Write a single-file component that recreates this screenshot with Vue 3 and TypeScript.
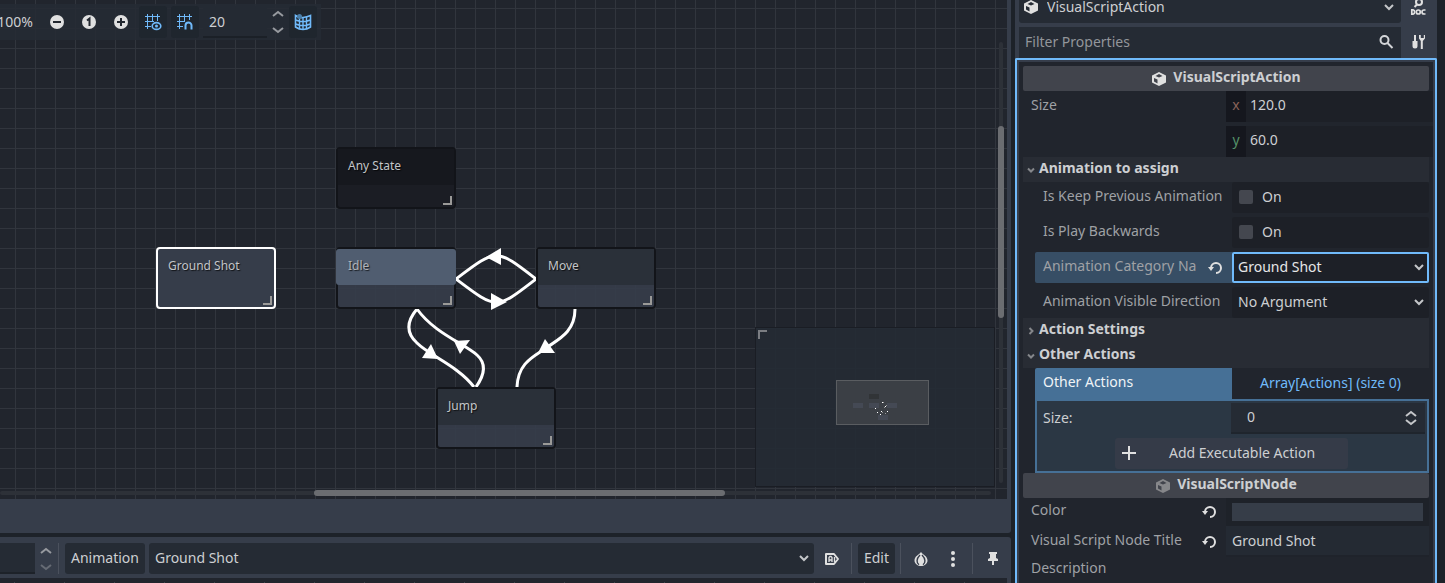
<script setup lang="ts">
import { ref } from 'vue'

interface GraphNode {
  id: string
  title: string
  x: number
  y: number
  kind: string
}

const nodes: GraphNode[] = [
  { id: 'any', title: 'Any State', x: 336, y: 147, kind: 'any' },
  { id: 'shot', title: 'Ground Shot', x: 156, y: 247, kind: 'selected' },
  { id: 'idle', title: 'Idle', x: 336, y: 247, kind: 'idle' },
  { id: 'move', title: 'Move', x: 536, y: 247, kind: 'plain' },
  { id: 'jump', title: 'Jump', x: 436, y: 387, kind: 'plain' },
]

const links: string[] = [
  'M456 279C497 248 496 248 536 279',
  'M456 279C497 310 496 310 536 279',
  'M417 309C406 322 406 333 417 343C430 356 458 366 474 387',
  'M476 387C486 373 486 363 477 355C465 344 434 333 417 309',
  'M575 309C575 333 557 340 546 348S518 362 517 387',
]

const arrows: string[] = [
  '501,248 501,265 486,257',
  '491,293 491,310 507,302',
  '431,344 422,358 438,359',
  '454,341 470,340 460,354',
  '545,339 555,353 538,353',
]

const gridStep = ref('20')
const frame = ref('')
const width = ref('120.0')
const height = ref('60.0')
const keepPrevious = ref(false)
const playBackwards = ref(false)
const arraySize = ref('0')
const nodeTitle = ref('Ground Shot')
</script>

<template>
  <div class="editor">
    <main class="left">
      <section class="canvas" aria-label="State graph">
        <svg class="links" aria-hidden="true">
          <path v-for="d in links" :key="d" :d="d" />
          <polygon v-for="p in arrows" :key="p" :points="p" />
        </svg>
        <article v-for="n in nodes" :key="n.id" class="node" :class="n.kind" :style="{ left: n.x + 'px', top: n.y + 'px' }">
          <header>{{ n.title }}</header>
          <i class="grip"></i>
        </article>

        <div class="toolbar">
          <span class="zoom">100%</span>
          <button class="tool" aria-label="Zoom out">
            <svg width="16" height="16" viewBox="0 0 16 16"><circle cx="8" cy="8" r="7" fill="#e0e0e0" /><path d="M4 8h8" stroke="#22272f" stroke-width="2" /></svg>
          </button>
          <button class="tool" aria-label="Reset zoom">
            <svg width="16" height="16" viewBox="0 0 16 16"><circle cx="8" cy="8" r="7" fill="#e0e0e0" /><path d="M6 6.500 8.500 4.500V12" fill="none" stroke="#22272f" stroke-width="2" /></svg>
          </button>
          <button class="tool" aria-label="Zoom in">
            <svg width="16" height="16" viewBox="0 0 16 16"><circle cx="8" cy="8" r="7" fill="#e0e0e0" /><path d="M4 8h8M8 4v8" stroke="#22272f" stroke-width="2" /></svg>
          </button>
          <button class="tool on" aria-label="Show grid">
            <svg width="18" height="18" viewBox="0 0 18 18" fill="none" stroke="#70bafa"><path d="M3.500 1v15M8.500 1v8M13.500 1v7M1 3.500h15M1 8.500h9M1 13.500h6" /><ellipse cx="12.500" cy="13" rx="4.300" ry="3.400" stroke-width="1.600" /><circle cx="12.500" cy="13" r="1.500" fill="#70bafa" stroke="none" /></svg>
          </button>
          <button class="tool on" aria-label="Snap to grid">
            <svg width="18" height="18" viewBox="0 0 18 18" fill="none" stroke="#70bafa"><path d="M3.500 1v15M8.500 1v8M13.500 1v6M1 3.500h15M1 8.500h8M1 13.500h6" /><path d="M9.500 16.500V12.500a3 3 0 0 1 6 0v4" stroke-width="2" /></svg>
          </button>
          <input v-model="gridStep" class="step" aria-label="Grid step" />
          <div class="spin">
            <button aria-label="Increase grid step"><svg width="12" height="8" viewBox="0 0 12 8"><path d="M1 6 6 2l5 4" /></svg></button>
            <button aria-label="Decrease grid step"><svg width="12" height="8" viewBox="0 0 12 8"><path d="M1 2l5 4 5-4" /></svg></button>
          </div>
          <button class="tool on" aria-label="Toggle minimap">
            <svg width="18" height="18" viewBox="0 0 18 18" fill="none" stroke="#70bafa"><path d="M1.500 2.500Q5 5 9 4.500T16.500 2.500V14Q13 16.500 9 16.500T1.500 14Z" stroke-width="1.600" /><path d="M5.500 4v12M9 4.500v12M12.500 4v12M1.500 7Q9 10 16.500 7M1.500 11Q9 14 16.500 11" stroke-width="1.400" /><circle cx="5.500" cy="3.500" r="2.500" fill="#4c7fa8" stroke="none" /></svg>
          </button>
        </div>

        <div class="minimap">
          <i class="corner"></i>
          <svg width="93" height="45" viewBox="0 0 93 45" aria-hidden="true">
            <rect x=".5" y=".5" width="92" height="44" fill="#3b3f45" stroke="#5a5d61" />
            <path d="M33 14h10v5H33z" fill="#313437" />
            <path d="M17 23h10v5H17zM33 23h10v5H33zM51 23h10v5H51zM42 35h10v5H42z" fill="#444954" />
            <path d="M46 22h1v1h-1zM49 26h1v1h-1zM39 28h1v1h-1zM41 32h1v1h-1zM45 31h1v1h-1zM51 31h1v1h-1zM44 34h1v1h-1z" fill="#fff" />
            <path d="M47 22h1v1h-1zM50 25h1v1h-1zM48 27h1v1h-1zM46 32h1v1h-1zM49 33h1v1h-1z" fill="#999" />
          </svg>
        </div>
        <i class="vbar"></i><i class="vthumb"></i>
        <i class="hbar"></i><i class="hthumb"></i>
      </section>
      <div class="strip"></div>

      <section class="anim">
        <div class="animbar">
          <input v-model="frame" class="frame" aria-label="Animation position" />
          <div class="spin">
            <button aria-label="Next frame"><svg width="12" height="8" viewBox="0 0 12 8"><path d="M1 6 6 2l5 4" /></svg></button>
            <button class="dim" aria-label="Previous frame"><svg width="12" height="8" viewBox="0 0 12 8"><path d="M1 2l5 4 5-4" /></svg></button>
          </div>
          <i class="sep"></i>
          <button class="flat">Animation</button>
          <label class="drop grow">
            <select aria-label="Current animation"><option>Ground Shot</option></select>
            <svg class="chev" width="12" height="8" viewBox="0 0 12 8"><path d="M2 2l4 4 4-4" /></svg>
          </label>
          <button class="icon" aria-label="Autoplay on load">
            <svg width="16" height="16" viewBox="0 0 16 16" fill="none" stroke="#e0e0e0"><path d="M2 3h8l4 5-4 5H2z" stroke-width="2" stroke-linejoin="round" /><path d="M5 11V6.500l1-1h1l1 1V11M5 9h3M10.500 6v5" stroke-width="1.300" /></svg>
          </button>
          <i class="sep"></i>
          <button class="flat">Edit</button>
          <i class="sep"></i>
          <button class="icon" aria-label="Onion skinning">
            <svg width="16" height="16" viewBox="0 0 16 16"><path d="M8 1C6 4 1.500 5 1.500 9.500 1.500 13 5 15 8 15s6.500-2 6.500-5.500C14.500 5 10 4 8 1z" fill="#e0e0e0" /><path d="M7 4C3 8 3.500 12 6 13.800M9 4c4 4 3.500 8 1 9.800" fill="none" stroke="#363d4a" stroke-width="1.400" /></svg>
          </button>
          <button class="icon" aria-label="Onion skinning options">
            <svg width="16" height="18" viewBox="0 0 16 18" fill="#e0e0e0"><circle cx="8" cy="3" r="2" /><circle cx="8" cy="9" r="2" /><circle cx="8" cy="15" r="2" /></svg>
          </button>
          <i class="sep"></i>
          <button class="icon" aria-label="Pin player">
            <svg width="16" height="16" viewBox="0 0 16 16" fill="#e0e0e0"><path d="M4 1h8v2h-1v4l2 1v2H9v4H7v-4H3V8l2-1V3H4z" /></svg>
          </button>
        </div>
        <div class="timeline"></div>
      </section>
    </main>

    <aside class="dock">
      <div class="docktop">
        <label class="drop object">
          <svg class="cube" width="16" height="16" viewBox="0 0 16 16"><path fill="#e0e0e0" fill-rule="evenodd" d="M8 1 15 4.500V11.500L8 15 1 11.500V4.500zM8 3 4.500 5 8 6.500 11.500 5zM3 7v3.500l3.500 2V8.500z" /></svg>
          <select aria-label="Edited object"><option>VisualScriptAction</option></select>
          <svg class="chev" width="12" height="8" viewBox="0 0 12 8"><path d="M2 2l4 4 4-4" /></svg>
        </label>
        <button class="icon side" aria-label="Open documentation">
          <svg width="16" height="18" viewBox="0 0 16 18" fill="none" stroke="#e0e0e0"><circle cx="9" cy="4" r="3" stroke-width="2" /><path d="M7 6.500 4.500 9" stroke-width="2" /><path d="M1.800 11.800h1.200a2.300 2.300 0 0 1 0 4.400H1.800zM15.500 12h-1.500a2 2 0 0 0 0 4h1.500" stroke-width="1.700" /><circle cx="8.300" cy="14" r="2" stroke-width="1.700" /></svg>
        </button>
        <div class="filter">
          <input type="text" placeholder="Filter Properties" aria-label="Filter Properties" />
          <svg width="16" height="16" viewBox="0 0 16 16" fill="none" stroke="#d3d5d8" stroke-width="2"><circle cx="6.500" cy="6" r="4" /><path d="m9.500 9 5 5" /></svg>
        </div>
        <button class="icon side" aria-label="Manage properties">
          <svg width="16" height="16" viewBox="0 0 16 16" fill="#e0e0e0"><path d="M4 1h2v6h1.500v5a2.500 2.500 0 0 1-5 0V7H4zM9 1v3.500L10.800 7v8h2V7L15 4.500V1h-1.200v3h-3V1z" /></svg>
        </button>
      </div>

      <div class="inspector">
        <div class="props">
          <h2>
            <svg width="16" height="16" viewBox="0 0 16 16"><path fill="#e0e0e0" fill-rule="evenodd" d="M8 1 15 4.500V11.500L8 15 1 11.500V4.500zM8 3 4.500 5 8 6.500 11.500 5zM3 7v3.500l3.500 2V8.500z" /></svg>
            VisualScriptAction
          </h2>
          <div class="row">
            <span class="name">Size</span>
            <div class="vec">
              <label class="axis"><b class="x">x</b><input v-model="width" /></label>
              <label class="axis"><b class="y">y</b><input v-model="height" /></label>
            </div>
          </div>

          <button class="group"><svg class="tw" width="10" height="10" viewBox="0 0 10 10"><path d="M2 3.500 5 6.500l3-3" /></svg>Animation to assign</button>
          <div class="sub">
            <div class="row">
              <label class="name" for="keep">Is Keep Previous Animation</label>
              <label class="check"><input id="keep" v-model="keepPrevious" type="checkbox" />On</label>
            </div>
            <div class="row">
              <label class="name" for="back">Is Play Backwards</label>
              <label class="check"><input id="back" v-model="playBackwards" type="checkbox" />On</label>
            </div>
            <div class="row active">
              <label class="name" for="category"><span>Animation Category Na</span>
                <svg class="undo" width="16" height="16" viewBox="0 0 16 16"><path d="M4 9a5 5 0 1 1 5 5" fill="none" stroke="#e0e0e0" stroke-width="2" /><path d="M1 8h6L4 12z" fill="#e0e0e0" /></svg>
              </label>
              <div class="drop val">
                <select id="category"><option>Ground Shot</option></select>
                <svg class="chev" width="12" height="8" viewBox="0 0 12 8"><path d="M2 2l4 4 4-4" /></svg>
              </div>
            </div>
            <div class="row">
              <label class="name" for="direction">Animation Visible Direction</label>
              <div class="drop val">
                <select id="direction"><option>No Argument</option></select>
                <svg class="chev" width="12" height="8" viewBox="0 0 12 8"><path d="M2 2l4 4 4-4" /></svg>
              </div>
            </div>
          </div>

          <button class="group"><svg class="tw" width="10" height="10" viewBox="0 0 10 10"><path d="m3.500 2 3 3-3 3" /></svg>Action Settings</button>
          <button class="group"><svg class="tw" width="10" height="10" viewBox="0 0 10 10"><path d="M2 3.500 5 6.500l3-3" /></svg>Other Actions</button>
          <div class="sub array">
            <div class="row head">
              <span class="name">Other Actions</span>
              <button class="arraybtn">Array[Actions] (size 0)</button>
            </div>
            <div class="arraybox">
              <div class="row">
                <label class="name" for="size">Size:</label>
                <div class="num">
                  <input id="size" v-model="arraySize" />
                  <svg width="12" height="16" viewBox="0 0 12 16"><path d="m1 6 5-4 5 4M1 10l5 4 5-4" /></svg>
                </div>
              </div>
              <button class="add">
                <svg width="16" height="16" viewBox="0 0 16 16"><path d="M1 8h14M8 1v14" stroke="#e0e0e0" stroke-width="2" /></svg>
                <span>Add Executable Action</span>
              </button>
            </div>
          </div>

          <h2>
            <svg width="16" height="16" viewBox="0 0 16 16"><path fill="#86878a" fill-rule="evenodd" d="M8 1 15 4.500V11.500L8 15 1 11.500V4.500zM8 3 4.500 5 8 6.500 11.500 5zM3 7v3.500l3.500 2V8.500z" /></svg>
            VisualScriptNode
          </h2>
          <div class="row color">
            <span class="name"><span>Color</span>
              <svg class="undo" width="16" height="16" viewBox="0 0 16 16"><path d="M4 9a5 5 0 1 1 5 5" fill="none" stroke="#e0e0e0" stroke-width="2" /><path d="M1 8h6L4 12z" fill="#e0e0e0" /></svg>
            </span>
            <button class="swatch" aria-label="Color"><i></i></button>
          </div>
          <div class="row">
            <label class="name" for="title"><span>Visual Script Node Title</span>
              <svg class="undo" width="16" height="16" viewBox="0 0 16 16"><path d="M4 9a5 5 0 1 1 5 5" fill="none" stroke="#e0e0e0" stroke-width="2" /><path d="M1 8h6L4 12z" fill="#e0e0e0" /></svg>
            </label>
            <input id="title" v-model="nodeTitle" class="text" />
          </div>
          <div class="desc">Description</div>
        </div>
      </div>
    </aside>
  </div>
</template>

<style>
body {
  background: #1d2229;
  overflow: hidden;
}
</style>

<style scoped>
* {
  box-sizing: border-box;
}
.editor {
  display: grid;
  grid-template-columns: minmax(0, 1fr) 422px;
  gap: 4px;
  height: 100vh;
  padding-right: 8px;
  overflow: hidden;
  background: #1d2229;
  color: #cdcfd2;
  font: 14px/20px "Noto Sans", "Open Sans", sans-serif;
  white-space: nowrap;
}
button,
input,
select {
  font: inherit;
  color: inherit;
  border: 0;
  margin: 0;
  padding: 0;
  background: none;
  border-radius: 0;
  outline: none;
  min-width: 0;
}
select {
  appearance: none;
}
svg {
  display: block;
  flex: none;
}
.chev,
.spin svg,
.num svg {
  fill: none;
  stroke: #c4c6c9;
  stroke-width: 2;
}
.spin svg {
  stroke: #979a9f;
}

.left {
  display: flex;
  flex-direction: column;
  min-width: 0;
}
.canvas {
  position: relative;
  flex: 1;
  overflow: hidden;
  border-right: 4px solid #363d4a;
  background-color: #21252d;
  background-image: linear-gradient(90deg, #31353d 1px, transparent 1px), linear-gradient(#31353d 1px, transparent 1px);
  background-size: 20px 20px;
  background-position: 15px 8px;
}
.links {
  position: absolute;
  inset: 0;
  width: 100%;
  height: 100%;
}
.links path {
  fill: none;
  stroke: #fff;
  stroke-width: 3;
}
.links polygon {
  fill: #fff;
}
.node {
  position: absolute;
  width: 120px;
  height: 62px;
  border: 2px solid #121419;
  border-radius: 4px;
  background: rgba(54, 61, 74, 0.9);
  font-size: 12px;
  color: #c3c5c8;
  text-shadow: 1px 1px 1px rgba(0, 0, 0, 0.7);
}
.node header {
  height: 36px;
  padding: 7px 10px;
  line-height: 20px;
  background: #2a3039;
}
.node.any {
  background: #1b1d24;
}
.node.any header {
  background: #16181e;
}
.node.selected {
  border-color: #fff;
  background: #363d4a;
}
.node.selected header {
  background: none;
}
.node.idle header {
  margin: 0 -2px;
  padding-left: 12px;
  border-radius: 3px;
  background: #505d70;
  color: #b0b3b8;
}
.grip {
  position: absolute;
  right: 2px;
  bottom: 2px;
  width: 9px;
  height: 9px;
  border: solid #9b9a98;
  border-width: 0 2px 2px 0;
}
.toolbar {
  position: absolute;
  left: 0;
  top: 4px;
  display: flex;
  align-items: center;
  gap: 4px;
  height: 36px;
  padding-right: 4px;
  background: rgba(37, 43, 52, 0.86);
}
.zoom {
  display: flex;
  justify-content: flex-end;
  width: 33px;
  margin-right: 6px;
}
.tool {
  display: grid;
  place-items: center;
  width: 28px;
  height: 32px;
}
.tool.on {
  background: #1f262e;
  border-radius: 3px;
}
.step {
  width: 64px;
  height: 32px;
  padding: 0 6px;
  background: #242a33;
  border-bottom: 2px solid #1b2027;
}
.spin {
  display: flex;
  flex-direction: column;
  align-items: center;
  gap: 8px;
  width: 14px;
}
.dim {
  opacity: 0.5;
}
.minimap {
  position: absolute;
  right: 12px;
  bottom: 12px;
  width: 240px;
  height: 160px;
  border: 1px solid #1a1d24;
  background: rgba(37, 43, 52, 0.9);
}
.minimap svg {
  margin: 52px 0 0 80px;
}
.corner {
  position: absolute;
  left: 2px;
  top: 2px;
  width: 9px;
  height: 9px;
  border: solid #7b7d82;
  border-width: 2px 0 0 2px;
}
.vbar,
.vthumb,
.hbar,
.hthumb {
  position: absolute;
  border-radius: 3px;
}
.vbar {
  right: 4px;
  top: 42px;
  bottom: 16px;
  width: 4px;
  background: #2d3138;
}
.hbar {
  left: 0;
  right: 16px;
  bottom: 4px;
  height: 4px;
  background: #2d3138;
}
.vthumb {
  right: 3px;
  top: 126px;
  width: 6px;
  height: 192px;
  background: #6b6d71;
}
.hthumb {
  left: 314px;
  bottom: 3px;
  width: 411px;
  height: 6px;
  background: #6b6d71;
}
.strip {
  height: 34px;
  margin-bottom: 4px;
  background: #363d4a;
  border-radius: 0 0 3px 0;
}

.anim {
  height: 46px;
  padding: 6px 4px 0 0;
  background: #363d4a;
  border-radius: 0 3px 0 0;
}
.animbar {
  display: flex;
  align-items: center;
  gap: 4px;
  height: 31px;
}
.frame {
  width: 35px;
  height: 31px;
  background: #252b34;
  border-bottom: 2px solid #1d2229;
}
.animbar .sep {
  align-self: stretch;
  width: 1px;
  margin: 0 2px 0 1px;
  background: #4b515d;
}
.flat {
  height: 31px;
  padding: 0 6px 2px;
  border-radius: 3px;
  background: #252b34;
}
.drop {
  position: relative;
  display: flex;
  align-items: center;
  height: 31px;
  background: #252b34;
  border-radius: 3px;
}
.drop select {
  flex: 1;
  height: 100%;
  padding: 0 24px 2px 6px;
}
.chev {
  position: absolute;
  right: 4px;
  top: 11px;
  pointer-events: none;
}
.grow {
  flex: 1;
}
.icon {
  display: grid;
  place-items: center;
  width: 28px;
  height: 31px;
}
.timeline {
  height: 5px;
  margin-top: 4px;
  background: repeating-linear-gradient(90deg, transparent 0 14px, #41454d 14px 15px, transparent 15px 50px) 0 4px no-repeat, #21252d;
}

.dock {
  display: flex;
  flex-direction: column;
  min-height: 0;
  background: #363d4a;
}
.docktop {
  display: grid;
  grid-template-columns: 1fr 28px;
  column-gap: 3px;
  row-gap: 4px;
  margin-top: -8px;
  padding-left: 4px;
  padding-right: 5px;
}
.docktop .side {
  padding-bottom: 2px;
}
.cube {
  position: absolute;
  left: 4px;
  top: 7px;
}
.object select {
  padding-left: 28px;
}
.object .chev {
  right: 6px;
}
.filter {
  display: flex;
  align-items: center;
  height: 31px;
  padding: 0 7px 2px 6px;
  background: #252b34;
}
.filter input {
  flex: 1;
}
.filter input::placeholder {
  color: #93969b;
  opacity: 1;
}
.inspector {
  flex: 1;
  min-height: 0;
  padding: 2px 2px 0;
  border: 2px solid #70bafa;
  border-bottom: 0;
  border-radius: 2px 2px 0 0;
}
.props {
  height: 100%;
  padding: 4px 4px 0;
  overflow: hidden;
  background: #21252d;
}
h2 {
  display: flex;
  align-items: center;
  justify-content: center;
  gap: 6px;
  height: 25px;
  margin: 0;
  padding-bottom: 4px;
  font-size: 14px;
  line-height: 20px;
  border-radius: 2px;
  background: #41444c;
}
h2 svg {
  margin-top: 4px;
}
.row {
  display: grid;
  grid-template-columns: minmax(0, 1fr) minmax(0, 1fr);
  min-height: 31px;
}
.name {
  display: flex;
  align-items: center;
  gap: 10px;
  height: 27px;
  min-width: 0;
  padding: 0 9px 0 8px;
  color: #9fa1a5;
}
.name span {
  flex: 1;
}
.undo {
  margin-top: 3px;
}
.vec {
  display: grid;
  gap: 4px;
}
.axis {
  display: flex;
  height: 31px;
  line-height: 27px;
  background: #1d2027;
}
.axis b {
  width: 20px;
  text-align: center;
  font-weight: 400;
  background: #15171e;
}
.axis .x {
  color: #8a6359;
}
.axis .y {
  color: #549168;
}
.axis input {
  flex: 1;
  height: 27px;
  padding-left: 4px;
}
.group {
  display: flex;
  align-items: center;
  gap: 3px;
  width: 100%;
  height: 25px;
  padding: 0 0 3px 3px;
  font-weight: 700;
  background: #282c34;
}
.tw {
  margin-top: 4px;
  fill: none;
  stroke: #85878b;
  stroke-width: 2;
}
.sub {
  display: grid;
  gap: 4px;
  margin-left: 12px;
}
.check {
  display: flex;
  align-items: center;
  gap: 9px;
  padding: 0 0 2px 7px;
  background: #1d2027;
  border-radius: 3px;
}
.check input {
  appearance: none;
  width: 14px;
  height: 14px;
  border-radius: 2px;
  background: #44474f;
}
.check input:checked {
  background: #70bafa;
}
.val {
  background: #1d2027;
}
.active {
  background: #374e65;
  border-radius: 2px;
}
.active .val {
  box-shadow: inset 0 0 0 2px #70bafa;
  border-radius: 2px;
  color: #e6e7e8;
}
.array {
  gap: 0;
}
.head {
  background: #21252d;
}
.head .name {
  height: 31px;
  padding-bottom: 3px;
  background: #467096;
  border-radius: 2px 0 0 0;
  color: #f0f4f7;
}
.arraybtn {
  padding-bottom: 2px;
  color: #70bafa;
}
.arraybox {
  padding: 2px 2px 2px 0;
  border: 2px solid #467096;
  background: #2b3744;
}
.arraybox .name {
  height: 29px;
  padding-left: 6px;
  color: #cdcfd2;
}
.num {
  display: flex;
  align-items: center;
  height: 31px;
  padding-right: 8px;
  background: #252b34;
  border-bottom: 2px solid #1f252d;
}
.num input {
  flex: 1;
  padding: 0 0 2px 16px;
}
.add {
  display: flex;
  align-items: center;
  width: 233px;
  height: 31px;
  margin: 4px auto 0;
  padding: 0 6px 2px;
  background: #353b48;
  border-radius: 3px;
}
.add span {
  flex: 1;
  padding-left: 6px;
}
.color {
  min-height: 28px;
}
.color .name {
  height: 23px;
}
.swatch {
  padding: 5px 6px;
  background: #1e2229;
}
.swatch i {
  display: block;
  height: 18px;
  background: #363d48;
}
.text {
  width: 100%;
  height: 31px;
  padding: 0 6px;
  background: #242a33;
  border-bottom: 2px solid #1f232b;
}
.desc {
  padding: 1px 8px;
  color: #9fa1a5;
}
</style>
